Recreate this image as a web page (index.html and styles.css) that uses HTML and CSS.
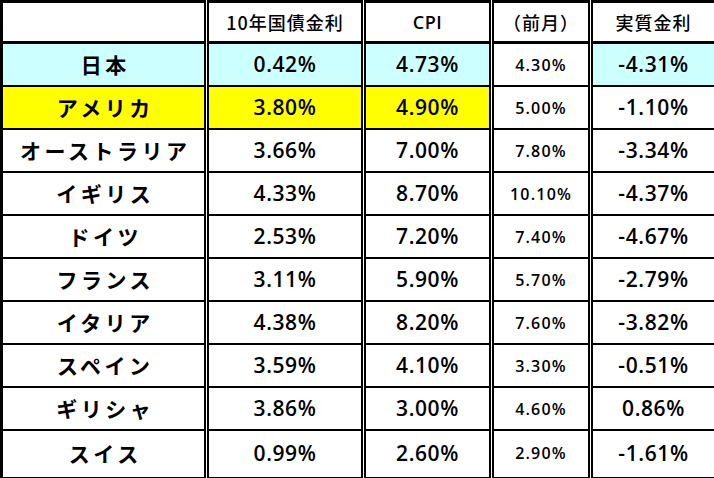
FILE: index.html
```html
<!DOCTYPE html>
<html lang="ja">
<head>
<meta charset="utf-8">
<link rel="stylesheet" href="styles.css">
</head>
<body>
<table class="rates">
  <colgroup>
    <col class="c-name"><col class="c-bond"><col class="c-cpi"><col class="c-prev"><col class="c-real">
  </colgroup>
  <thead>
    <tr>
      <th></th><th>10年国債金利</th><th class="latin">CPI</th><th>（前月）</th><th>実質金利</th>
    </tr>
  </thead>
  <tbody>
    <tr class="jp"><td class="name hl">日本</td><td class="num hl">0.42%</td><td class="num hl">4.73%</td><td class="prev">4.30%</td><td class="num hl">-4.31%</td></tr>
    <tr class="us"><td class="name hl">アメリカ</td><td class="num hl">3.80%</td><td class="num hl">4.90%</td><td class="prev">5.00%</td><td class="num">-1.10%</td></tr>
    <tr><td class="name">オーストラリア</td><td class="num">3.66%</td><td class="num">7.00%</td><td class="prev">7.80%</td><td class="num">-3.34%</td></tr>
    <tr><td class="name">イギリス</td><td class="num">4.33%</td><td class="num">8.70%</td><td class="prev">10.10%</td><td class="num">-4.37%</td></tr>
    <tr><td class="name">ドイツ</td><td class="num">2.53%</td><td class="num">7.20%</td><td class="prev">7.40%</td><td class="num">-4.67%</td></tr>
    <tr><td class="name">フランス</td><td class="num">3.11%</td><td class="num">5.90%</td><td class="prev">5.70%</td><td class="num">-2.79%</td></tr>
    <tr><td class="name">イタリア</td><td class="num">4.38%</td><td class="num">8.20%</td><td class="prev">7.60%</td><td class="num">-3.82%</td></tr>
    <tr><td class="name">スペイン</td><td class="num">3.59%</td><td class="num">4.10%</td><td class="prev">3.30%</td><td class="num">-0.51%</td></tr>
    <tr><td class="name">ギリシャ</td><td class="num">3.86%</td><td class="num">3.00%</td><td class="prev">4.60%</td><td class="num">0.86%</td></tr>
    <tr class="last"><td class="name">スイス</td><td class="num">0.99%</td><td class="num">2.60%</td><td class="prev">2.90%</td><td class="num">-1.61%</td></tr>
  </tbody>
</table>
</body>
</html>
```

FILE: styles.css
```css
html, body {
  margin: 0;
  padding: 0;
  background: #fff;
}
body {
  width: 714px;
  height: 478px;
  overflow: hidden;
  font-family: "Noto Sans CJK JP", "Noto Sans", sans-serif;
  color: #000;
}
.rates {
  width: 714px;
  table-layout: fixed;
  border-collapse: collapse;
  border: 3px solid #000;
}
.c-name { width: 205px; }
.c-bond { width: 157px; }
.c-cpi { width: 128px; }
.c-prev { width: 99px; }
.c-real { width: 125px; }

.rates th,
.rates td {
  padding: 0;
  text-align: center;
  vertical-align: middle;
  border-bottom: 2px solid #000;
  border-left: 5px double #000;
  overflow: hidden;
  white-space: nowrap;
}
.rates th:first-child,
.rates td:first-child {
  border-left: 3px solid #000;
}
.rates th {
  height: 37px;
  padding-bottom: 1px;
  font-size: 18px;
  font-weight: 500;
  letter-spacing: 1px;
  line-height: 1;
  border-bottom: 3px solid #000;
}
.rates th.latin {
  font-family: "Open Sans", "Noto Sans", sans-serif;
  font-weight: 600;
  font-size: 18px;
  letter-spacing: 0.5px;
}
.rates td {
  height: 41px;
  line-height: 1;
}
.rates .last td {
  height: 44px;
  padding-bottom: 2px;
}
.name {
  font-size: 21px;
  font-weight: 700;
  letter-spacing: 3.5px;
  text-indent: 3.5px;
}
.num {
  font-family: "Open Sans", "Noto Sans", sans-serif;
  font-size: 21px;
  font-weight: 600;
  letter-spacing: 0.6px;
}
.prev {
  font-family: "Open Sans", "Noto Sans", sans-serif;
  font-size: 16px;
  font-weight: 600;
  letter-spacing: 1.2px;
}
.jp .hl { background: #ccffff; }
.us .hl { background: #ffff00; }
```
